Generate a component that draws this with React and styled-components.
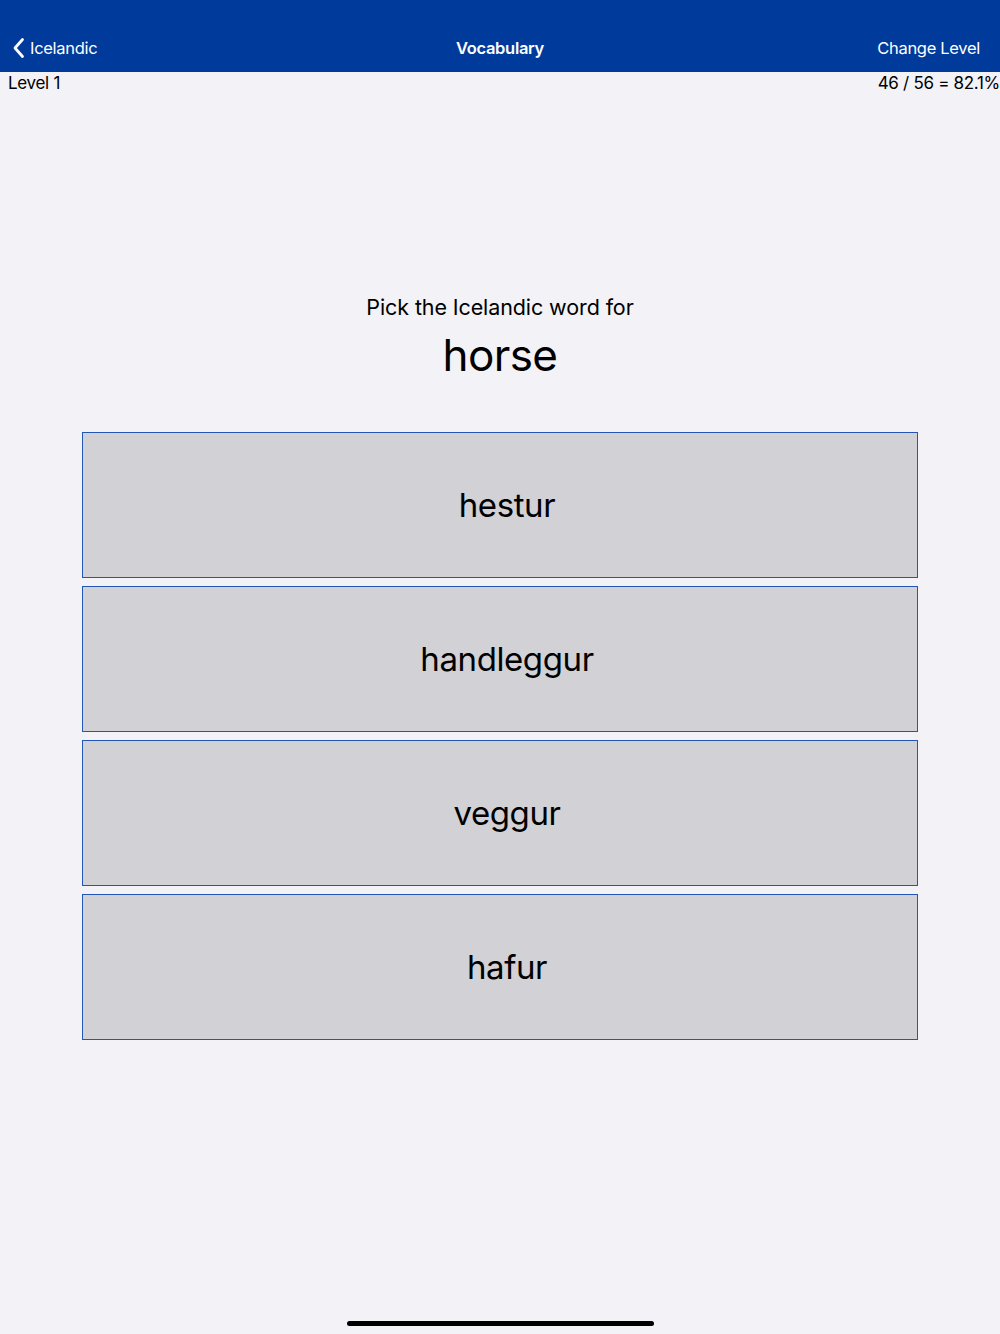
import React from 'react'
import styled, { createGlobalStyle } from 'styled-components';

const Global = createGlobalStyle`
  html, body {
    margin: 0;
    padding: 0;
    background: #f2f2f7;
  }
  body {
    font-family: Inter, "Noto Sans", "Liberation Sans", sans-serif;
    color: #000;
  }
`;

const Page = styled.div`
  width: 1000px;
  height: 1334px;
  display: flex;
  flex-direction: column;
  background: #f2f2f7;
  overflow: hidden;
`;

const NavBar = styled.div`
  height: 72px;
  box-sizing: border-box;
  padding-top: 24px;
  background: #003a9b;
  display: grid;
  grid-template-columns: 1fr auto 1fr;
  align-items: center;
  color: #fff;
  font-size: 16.5px;
  letter-spacing: -0.3px;
`;

const BackButton = styled.div`
  display: flex;
  align-items: center;
  gap: 5px;
  padding-left: 12px;
`;

const Title = styled.div`
  font-weight: 600;
`;

const NavAction = styled.div`
  justify-self: end;
  padding-right: 20px;
`;

const InfoRow = styled.div`
  height: 22px;
  display: flex;
  justify-content: space-between;
  align-items: center;
  padding-left: 8px;
  font-size: 17px;
  letter-spacing: -0.3px;
`;

const Prompt = styled.div`
  margin-top: 201px;
  text-align: center;
  font-size: 21.5px;
  line-height: 24px;
  letter-spacing: -0.1px;
`;

const Word = styled.div`
  margin-top: 10px;
  text-align: center;
  font-size: 44px;
  line-height: 52px;
  letter-spacing: -0.6px;
`;

const Choices = styled.div`
  margin: 51px auto 0;
  width: 836px;
  display: flex;
  flex-direction: column;
  gap: 8px;
`;

const Choice = styled.button`
  height: 146px;
  box-sizing: border-box;
  border: 1px solid #2456b8;
  background: #d1d1d6;
  font-family: inherit;
  font-size: 33px;
  letter-spacing: -0.4px;
  color: #000;
  padding: 0 0 0 14px;
  cursor: pointer;
`;

const HomeBar = styled.div`
  margin: auto auto 8px;
  width: 307px;
  height: 5px;
  border-radius: 3px;
  background: #000;
`;

const choices = ['hestur', 'handleggur', 'veggur', 'hafur'];

export default function App() {
  return (
    <Page>
      <Global />
      <NavBar>
        <BackButton>
          <svg width="13" height="22" viewBox="0 0 13 22">
            <path d="M10.5 2.5 L3 11 L10.5 19.5" fill="none" stroke="#fff" strokeWidth="2.8" strokeLinecap="round" strokeLinejoin="round" />
          </svg>
          Icelandic
        </BackButton>
        <Title>Vocabulary</Title>
        <NavAction>Change Level</NavAction>
      </NavBar>
      <InfoRow>
        <span>Level 1</span>
        <span>46 / 56 = 82.1%</span>
      </InfoRow>
      <Prompt>Pick the Icelandic word for</Prompt>
      <Word>horse</Word>
      <Choices>
        {choices.map((c) => (
          <Choice key={c}>{c}</Choice>
        ))}
      </Choices>
      <HomeBar />
    </Page>
  )
}
